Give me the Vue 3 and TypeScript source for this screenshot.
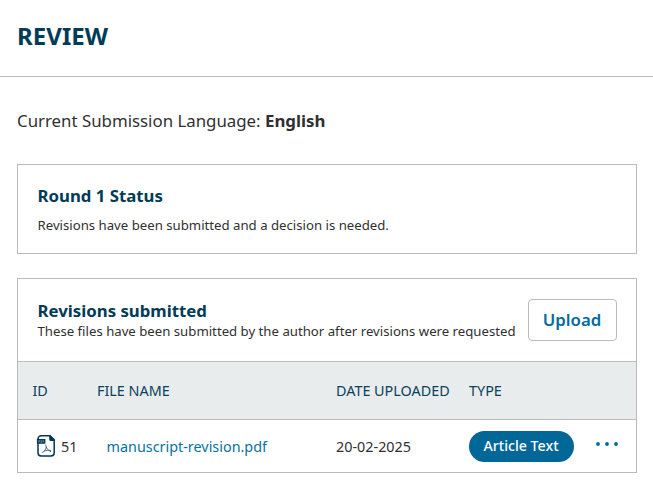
<script setup lang="ts">
interface RevisionFile {
  id: number
  name: string
  uploaded: string
  type: string
}

const columns: string[] = ['ID', 'FILE NAME', 'DATE UPLOADED', 'TYPE']
const files: RevisionFile[] = [
  { id: 51, name: 'manuscript-revision.pdf', uploaded: '20-02-2025', type: 'Article Text' },
]
</script>

<template>
  <main class="page">
    <header class="page-header">
      <h1 class="page-title">REVIEW</h1>
    </header>
    <div class="content">
      <p class="language">Current Submission Language: <strong>English</strong></p>

      <section class="panel status">
        <h2 class="heading">Round 1 Status</h2>
        <p class="description">Revisions have been submitted and a decision is needed.</p>
      </section>

      <section class="panel">
        <div class="panel-top">
          <div class="panel-copy">
            <h2 class="heading">Revisions submitted</h2>
            <p class="description">These files have been submitted by the author after revisions were requested</p>
          </div>
          <button class="upload" type="button">Upload</button>
        </div>
        <div class="row row-head">
          <span v-for="column in columns" :key="column">{{ column }}</span>
        </div>
        <div v-for="file in files" :key="file.id" class="row row-body">
          <span class="file-id">
            <svg class="file-icon" viewBox="0 0 20 24" width="20" height="24">
              <path
                d="M5.2 1.8H14L18.2 6V18.8a3.2 3.2 0 0 1-3.2 3.2H5.2A3.2 3.2 0 0 1 2 18.8V5a3.2 3.2 0 0 1 3.2-3.2Z"
                fill="none" stroke="#003752" stroke-width="1.5"
              />
              <path d="M13.2 1.2h1.2l4.4 4.4v1.3H14.6a1.4 1.4 0 0 1-1.4-1.4Z" fill="#003752" />
              <rect x=".9" y="5" width="8.5" height="4.7" rx=".4" fill="#003752" />
              <path
                d="M2.7 8.7V6.3h.9v1.2h-.9M4.9 6.3v2.2h.8V6.3ZM7 8.7V6.3h1.2M7 7.5h1"
                fill="none" stroke="#8fa9b6" stroke-width=".5"
              />
              <path
                d="M9.7 11c.5 3.2 1.9 5.2 5 6.6M10.3 13.3c-.5 2.2-2 4.3-3.9 5.2M8.2 17.2c2-.9 4.1-1.2 6.6-.8"
                fill="none" stroke="#1f506a" stroke-width=".8" stroke-linecap="round"
              />
            </svg>
            <span class="number">{{ file.id }}</span>
          </span>
          <a class="file-name">{{ file.name }}</a>
          <span class="date">{{ file.uploaded }}</span>
          <span><span class="badge">{{ file.type }}</span></span>
          <button class="more" type="button">
            <svg viewBox="0 0 24 6" width="24" height="6" fill="#006798">
              <circle cx="3" cy="3" r="1.9" />
              <circle cx="12" cy="3" r="1.9" />
              <circle cx="21" cy="3" r="1.9" />
            </svg>
          </button>
        </div>
      </section>
    </div>
  </main>
</template>

<style>
body {
  background: #fff;
}
</style>

<style scoped>
.page {
  box-sizing: border-box;
  height: 492px;
  overflow: hidden;
  font-family: 'Noto Sans', sans-serif;
  color: #303030;
}
h1,
h2,
p {
  margin: 0;
}
.page-header {
  padding: 20px 17px 24px;
  border-bottom: 1px solid #bbb;
}
.page-title {
  font-size: 24px;
  letter-spacing: 0.05px;
  line-height: 32px;
  font-weight: 700;
  color: #003b57;
}
.content {
  padding: 32px 16px 0 17px;
}
.language {
  font-size: 16.84px;
  line-height: 24px;
}
.panel {
  border: 1px solid #bbb;
}
.status {
  box-sizing: border-box;
  height: 90px;
  margin: 31px 0 24px;
  padding: 19px 20px 0 19.5px;
}
.heading {
  font-size: 16.8px;
  line-height: 24px;
  font-weight: 700;
  color: #003b57;
}
.description {
  font-size: 13.2px;
  line-height: 18px;
  white-space: nowrap;
}
.status .description {
  margin-top: 8px;
}
.panel-top {
  display: flex;
  justify-content: space-between;
  height: 62px;
  padding: 20px 19px 0 19.5px;
}
.panel-copy .description {
  margin-top: -1px;
}
.upload {
  box-sizing: border-box;
  flex: none;
  width: 89px;
  height: 42px;
  padding: 0 1px 0 0;
  border: 1px solid #bbb;
  border-radius: 4px;
  background: #fff;
  color: #006c9d;
  font: 600 16.8px/24px 'Noto Sans', sans-serif;
}
.row {
  display: grid;
  grid-template-columns: 64.5px 239px 133px 126px 1fr;
  align-items: center;
  box-sizing: border-box;
  border-top: 1px solid #bbb;
  padding-left: 14.5px;
  font-size: 14.38px;
  line-height: 20px;
}
.row-head {
  height: 58px;
  background: #e8eced;
  color: #0a415c;
}
.row-body {
  height: 53px;
}
.file-id {
  display: flex;
  align-items: center;
  gap: 5px;
  padding-left: 3.5px;
}
.file-icon {
  flex: none;
}
.number,
.file-name,
.date {
  padding-top: 2px;
}
.file-name {
  padding-left: 9.5px;
  color: #0871a1;
}
.badge {
  display: block;
  box-sizing: border-box;
  width: 105px;
  height: 31px;
  padding-right: 1px;
  border-radius: 16px;
  background: #006798;
  color: #fff;
  font-size: 14.2px;
  font-weight: 500;
  line-height: 30px;
  text-align: center;
}
.more {
  display: flex;
  padding: 0 0 5px;
  border: 0;
  background: none;
}
</style>
